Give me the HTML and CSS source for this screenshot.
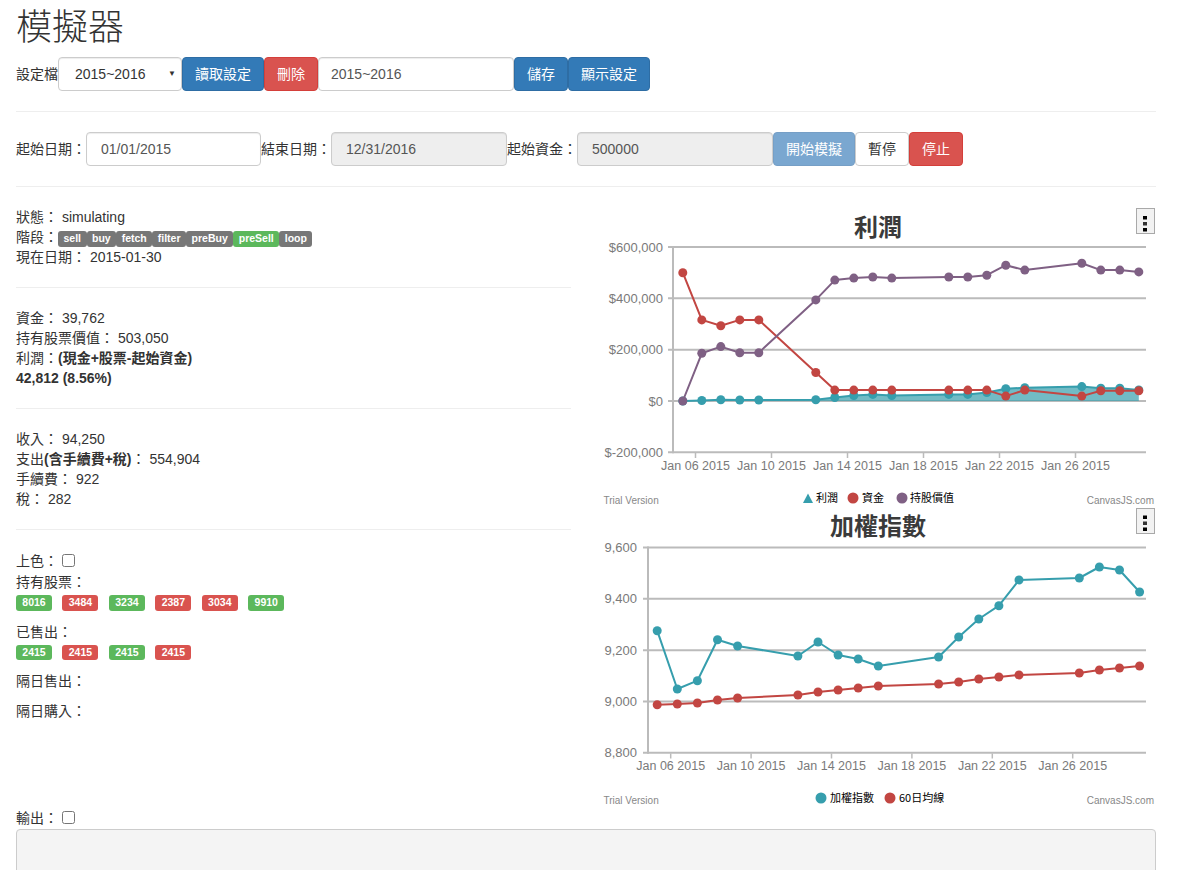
FILE: index.html
```html
<!DOCTYPE html>
<html lang="zh-Hant">
<head>
<meta charset="utf-8">
<title>模擬器</title>
<link rel="stylesheet" href="styles.css">
</head>
<body>
<div class="container">
  <h1 class="page-title">模擬器</h1>

  <div class="toolbar">
    <span class="field-label">設定檔</span>
    <div class="form-control select-box"><span>2015~2016</span><span class="caret">▼</span></div>
    <button class="btn btn-primary">讀取設定</button>
    <button class="btn btn-danger">刪除</button>
    <input class="form-control name-input" value="2015~2016">
    <button class="btn btn-primary">儲存</button>
    <button class="btn btn-primary">顯示設定</button>
  </div>

  <hr>

  <div class="toolbar">
    <span class="field-label">起始日期：</span>
    <input class="form-control date-in start-date" value="01/01/2015">
    <span class="field-label">結束日期：</span>
    <input class="form-control date-in end-date" value="12/31/2016" disabled>
    <span class="field-label">起始資金：</span>
    <input class="form-control date-in capital" value="500000" disabled>
    <button class="btn btn-primary-disabled">開始模擬</button>
    <button class="btn btn-default">暫停</button>
    <button class="btn btn-danger">停止</button>
  </div>

  <hr>

  <div class="main-row">
    <div class="col">
      <div class="line">狀態： simulating</div>
      <div class="line">階段：<span class="label stage label-default">sell</span><span class="label stage label-default">buy</span><span class="label stage label-default">fetch</span><span class="label stage label-default">filter</span><span class="label stage label-default">preBuy</span><span class="label stage label-success">preSell</span><span class="label stage label-default">loop</span></div>
      <div class="line">現在日期： 2015-01-30</div>
      <hr>
      <div class="line">資金： 39,762</div>
      <div class="line">持有股票價值： 503,050</div>
      <div class="line">利潤：<b>(現金+股票-起始資金)</b></div>
      <div class="line"><b>42,812 (8.56%)</b></div>
      <hr>
      <div class="line">收入： 94,250</div>
      <div class="line">支出<b>(含手續費+稅)</b>： 554,904</div>
      <div class="line">手續費： 922</div>
      <div class="line">稅： 282</div>
      <hr>
      <div class="check-line">上色： <input type="checkbox" class="check"></div>
      <div class="group">
        <div class="line">持有股票：</div>
        <div class="tag-row">
          <span class="label label-success">8016</span>
          <span class="label label-danger">3484</span>
          <span class="label label-success">3234</span>
          <span class="label label-danger">2387</span>
          <span class="label label-danger">3034</span>
          <span class="label label-success">9910</span>
        </div>
      </div>
      <div class="group">
        <div class="line">已售出：</div>
        <div class="tag-row">
          <span class="label label-success">2415</span>
          <span class="label label-danger">2415</span>
          <span class="label label-success">2415</span>
          <span class="label label-danger">2415</span>
        </div>
      </div>
      <div class="group">
        <div class="line">隔日售出：</div>
        <div class="tag-row"></div>
      </div>
      <div class="group">
        <div class="line">隔日購入：</div>
        <div class="tag-row"></div>
      </div>
    </div>

    <div class="col charts">
      <svg class="chart" width="555" height="300" viewBox="0 0 555 300">
        <defs>
          <marker id="m1-teal" markerUnits="userSpaceOnUse" markerWidth="10" markerHeight="10" refX="5" refY="5"><circle cx="5" cy="5" r="4.5" fill="#369EAD"/></marker>
          <marker id="m1-red" markerUnits="userSpaceOnUse" markerWidth="10" markerHeight="10" refX="5" refY="5"><circle cx="5" cy="5" r="4.5" fill="#C24642"/></marker>
          <marker id="m1-purple" markerUnits="userSpaceOnUse" markerWidth="10" markerHeight="10" refX="5" refY="5"><circle cx="5" cy="5" r="4.5" fill="#7F6084"/></marker>
        </defs>
        <text class="chart-title" x="277" y="29" text-anchor="middle">利潤</text>
        <rect x="535.5" y="1.5" width="18" height="25" fill="#f2f2f2" stroke="#a9a9a9"/>
        <rect x="542" y="9" width="4" height="3.5" fill="#000"/>
        <rect x="542" y="15" width="4" height="3.5" fill="#333"/>
        <rect x="542" y="21" width="4" height="3.5" fill="#000"/>

        <g class="grid">
          <line x1="67" y1="40" x2="545" y2="40"/>
          <line x1="67" y1="91.3" x2="545" y2="91.3"/>
          <line x1="67" y1="142.7" x2="545" y2="142.7"/>
          <line x1="67" y1="194" x2="545" y2="194"/>
          <line x1="67" y1="245.3" x2="545" y2="245.3"/>
          <line x1="72" y1="39" x2="72" y2="246.3"/>
        </g>
        <g class="ticks">
          <line x1="94.5" y1="246" x2="94.5" y2="251"/>
          <line x1="170.5" y1="246" x2="170.5" y2="251"/>
          <line x1="246.5" y1="246" x2="246.5" y2="251"/>
          <line x1="322.5" y1="246" x2="322.5" y2="251"/>
          <line x1="398.5" y1="246" x2="398.5" y2="251"/>
          <line x1="474.5" y1="246" x2="474.5" y2="251"/>
        </g>
        <g class="ylabels" text-anchor="end">
          <text x="62" y="44.5">$600,000</text>
          <text x="62" y="95.8">$400,000</text>
          <text x="62" y="147.2">$200,000</text>
          <text x="62" y="198.5">$0</text>
          <text x="62" y="249.8">$-200,000</text>
        </g>
        <g class="xlabels" text-anchor="middle">
          <text x="94.5" y="263">Jan 06 2015</text>
          <text x="170.5" y="263">Jan 10 2015</text>
          <text x="246.5" y="263">Jan 14 2015</text>
          <text x="322.5" y="263">Jan 18 2015</text>
          <text x="398.5" y="263">Jan 22 2015</text>
          <text x="474.5" y="263">Jan 26 2015</text>
        </g>

        <polygon class="area" points="81.8,194 100.8,193.5 119.8,192.7 138.8,193 157.8,193 214.8,192.7 233.8,190.5 252.8,188.5 271.8,187.4 290.8,188.5 347.8,187.4 366.8,187.4 385.8,185.6 404.8,181.7 423.8,180.7 480.8,179.6 499.8,181.2 518.8,181.2 537.8,183 537.8,194"/>
        <polyline class="series s-teal" marker-start="url(#m1-teal)" marker-mid="url(#m1-teal)" marker-end="url(#m1-teal)" points="81.8,194 100.8,193.5 119.8,192.7 138.8,193 157.8,193 214.8,192.7 233.8,190.5 252.8,188.5 271.8,187.4 290.8,188.5 347.8,187.4 366.8,187.4 385.8,185.6 404.8,181.7 423.8,180.7 480.8,179.6 499.8,181.2 518.8,181.2 537.8,183"/>
        <polyline class="series s-red" marker-start="url(#m1-red)" marker-mid="url(#m1-red)" marker-end="url(#m1-red)" points="81.8,65.7 100.8,112.9 119.8,118.8 138.8,112.9 157.8,112.9 214.8,165.5 233.8,183.1 252.8,183.1 271.8,183.1 290.8,183.1 347.8,183.1 366.8,183.1 385.8,183.1 404.8,189.1 423.8,183.1 480.8,189.1 499.8,183.7 518.8,183.7 537.8,183.8"/>
        <polyline class="series s-purple" marker-start="url(#m1-purple)" marker-mid="url(#m1-purple)" marker-end="url(#m1-purple)" points="81.8,194 100.8,146.3 119.8,139.6 138.8,145.7 157.8,145.7 214.8,92.9 233.8,73.1 252.8,71.1 271.8,70 290.8,71.1 347.8,70 366.8,70 385.8,68.2 404.8,58.2 423.8,63.1 480.8,56.2 499.8,63.1 518.8,63.1 537.8,64.9"/>

        <polygon points="202,296 212,296 207,286.5" fill="#369EAD"/>
        <text class="legend" x="215" y="295">利潤</text>
        <circle cx="252" cy="291" r="5.5" fill="#C24642"/>
        <text class="legend" x="261" y="295">資金</text>
        <circle cx="301" cy="291" r="5.5" fill="#7F6084"/>
        <text class="legend" x="309" y="295">持股價值</text>

        <text class="credit" x="2.5" y="297">Trial Version</text>
        <text class="credit" x="553" y="297" text-anchor="end">CanvasJS.com</text>
      </svg>

      <svg class="chart" width="555" height="300" viewBox="0 0 555 300">
        <defs>
          <marker id="m2-teal" markerUnits="userSpaceOnUse" markerWidth="10" markerHeight="10" refX="5" refY="5"><circle cx="5" cy="5" r="4.5" fill="#369EAD"/></marker>
          <marker id="m2-red" markerUnits="userSpaceOnUse" markerWidth="10" markerHeight="10" refX="5" refY="5"><circle cx="5" cy="5" r="4.5" fill="#C24642"/></marker>
        </defs>
        <text class="chart-title" x="277" y="28" text-anchor="middle">加權指數</text>
        <rect x="535.5" y="1.5" width="18" height="25" fill="#f2f2f2" stroke="#a9a9a9"/>
        <rect x="542" y="8.5" width="4" height="3.5" fill="#000"/>
        <rect x="542" y="14.5" width="4" height="3.5" fill="#333"/>
        <rect x="542" y="20.5" width="4" height="3.5" fill="#000"/>

        <g class="grid">
          <line x1="42" y1="40.5" x2="545" y2="40.5"/>
          <line x1="42" y1="91.8" x2="545" y2="91.8"/>
          <line x1="42" y1="143.2" x2="545" y2="143.2"/>
          <line x1="42" y1="194.5" x2="545" y2="194.5"/>
          <line x1="42" y1="245.8" x2="545" y2="245.8"/>
          <line x1="47" y1="39.5" x2="47" y2="246.8"/>
        </g>
        <g class="ticks">
          <line x1="69.7" y1="246.5" x2="69.7" y2="251.5"/>
          <line x1="150.1" y1="246.5" x2="150.1" y2="251.5"/>
          <line x1="230.5" y1="246.5" x2="230.5" y2="251.5"/>
          <line x1="310.9" y1="246.5" x2="310.9" y2="251.5"/>
          <line x1="391.3" y1="246.5" x2="391.3" y2="251.5"/>
          <line x1="471.7" y1="246.5" x2="471.7" y2="251.5"/>
        </g>
        <g class="ylabels" text-anchor="end">
          <text x="36" y="45">9,600</text>
          <text x="36" y="96.3">9,400</text>
          <text x="36" y="147.7">9,200</text>
          <text x="36" y="199">9,000</text>
          <text x="36" y="250.3">8,800</text>
        </g>
        <g class="xlabels" text-anchor="middle">
          <text x="69.7" y="263">Jan 06 2015</text>
          <text x="150.1" y="263">Jan 10 2015</text>
          <text x="230.5" y="263">Jan 14 2015</text>
          <text x="310.9" y="263">Jan 18 2015</text>
          <text x="391.3" y="263">Jan 22 2015</text>
          <text x="471.7" y="263">Jan 26 2015</text>
        </g>

        <polyline class="series s-teal" marker-start="url(#m2-teal)" marker-mid="url(#m2-teal)" marker-end="url(#m2-teal)" points="56.2,123.7 76.3,182 96.4,173.7 116.5,132.7 136.6,139 196.9,149 217,135 237.1,148 257.2,152 277.3,159 337.6,150 357.7,130 377.8,112 397.9,98.7 418,73 478.3,71 498.4,60 518.5,63 538.6,85"/>
        <polyline class="series s-red" marker-start="url(#m2-red)" marker-mid="url(#m2-red)" marker-end="url(#m2-red)" points="56.2,197.7 76.3,197 96.4,196 116.5,193 136.6,191 196.9,188 217,185 237.1,183 257.2,181 277.3,179 337.6,177 357.7,175 377.8,172 397.9,170 418,168 478.3,166 498.4,163 518.5,161 538.6,159"/>

        <circle cx="220" cy="291" r="5.5" fill="#369EAD"/>
        <text class="legend" x="229" y="295">加權指數</text>
        <circle cx="289" cy="291" r="5.5" fill="#C24642"/>
        <text class="legend" x="298" y="295">60日均線</text>

        <text class="credit" x="2.5" y="297">Trial Version</text>
        <text class="credit" x="553" y="297" text-anchor="end">CanvasJS.com</text>
      </svg>
    </div>
  </div>

  <div class="check-line">輸出： <input type="checkbox" class="check"></div>
  <textarea class="output"></textarea>
</div>
</body>
</html>
```

FILE: styles.css
```css
* {
  box-sizing: border-box;
}

body {
  margin: 0;
  font-family: "Liberation Sans", "Noto Sans CJK TC", sans-serif;
  font-size: 14px;
  line-height: 20px;
  color: #333;
  background: #fff;
}

.container {
  width: 1172px;
  padding: 0 16px;
}

.page-title {
  margin: 8px 0 10px;
  font-size: 36px;
  line-height: 39px;
  font-weight: 300;
  color: #333;
}

.toolbar {
  display: flex;
  align-items: center;
  height: 34px;
}

.field-label {
  white-space: nowrap;
}

.form-control {
  height: 34px;
  padding: 6px 12px;
  font-family: "Liberation Sans", "Noto Sans CJK TC", sans-serif;
  font-size: 14px;
  line-height: 20px;
  color: #555;
  background: #fff;
  border: 1px solid #ccc;
  border-radius: 4px;
  box-shadow: inset 0 1px 1px rgba(0, 0, 0, 0.075);
}

.form-control:disabled {
  background: #eee;
  color: #555;
}

.select-box {
  width: 124px;
  display: flex;
  align-items: center;
  justify-content: space-between;
  padding: 6px 5px 6px 16px;
  color: #333;
}

.caret {
  font-size: 8px;
  color: #333;
}

.name-input {
  width: 196px;
}

.date-in {
  padding-left: 14px;
}

.start-date {
  width: 175px;
}

.end-date {
  width: 176px;
}

.capital {
  width: 196px;
}

.btn {
  height: 34px;
  padding: 0 12px;
  font-family: "Liberation Sans", "Noto Sans CJK TC", sans-serif;
  font-size: 14px;
  line-height: 20px;
  color: #fff;
  border: 1px solid transparent;
  border-radius: 4px;
  white-space: nowrap;
}

.btn-primary {
  background: #337ab7;
  border-color: #2e6da4;
}

.btn-primary-disabled {
  background: #7aa7d0;
  border-color: #769fc6;
}

.btn-danger {
  background: #d9534f;
  border-color: #d43f3a;
}

.btn-default {
  background: #fff;
  border-color: #ccc;
  color: #333;
}

hr {
  height: 0;
  margin: 20px 0;
  border: 0;
  border-top: 1px solid #eee;
}

.main-row {
  display: flex;
  gap: 30px;
}

.col {
  width: 555px;
}

.charts {
  display: flex;
  flex-direction: column;
}

.line {
  min-height: 20px;
}

.label {
  display: inline-block;
  padding: 2.1px 6.3px 3.15px;
  font-size: 10.5px;
  font-weight: 700;
  line-height: 1;
  color: #fff;
  border-radius: 3px;
  white-space: nowrap;
}

.label.stage {
  padding-left: 5.5px;
  padding-right: 5.5px;
}

.label-default {
  background: #777;
}

.label-success {
  background: #5cb85c;
}

.label-danger {
  background: #d9534f;
}

.check-line {
  display: flex;
  align-items: flex-start;
  height: 22px;
  line-height: 22px;
  white-space: pre;
}

.check {
  width: 13px;
  height: 13px;
  margin: 4px 0 0;
}

.group {
  margin-bottom: 10px;
}

.tag-row {
  display: flex;
  gap: 10.5px;
}

.tag-row .label {
  margin: 3px 0 1px;
}

.chart {
  display: block;
}

.chart-title {
  font-family: "Noto Sans CJK TC", sans-serif;
  font-size: 24px;
  font-weight: 700;
  fill: #3a3a3a;
}

.grid line {
  stroke: #bbb;
  stroke-width: 2;
}

.ticks line {
  stroke: #bbb;
  stroke-width: 1.5;
}

.ylabels text {
  font-family: "Liberation Sans", sans-serif;
  font-size: 13px;
  fill: #7a7a7a;
}

.xlabels text {
  font-family: "Liberation Sans", sans-serif;
  font-size: 12.5px;
  fill: #7a7a7a;
}

.area {
  fill: #369ead;
  fill-opacity: 0.7;
}

.series {
  fill: none;
  stroke-width: 2;
  stroke-linejoin: round;
}

.s-teal {
  stroke: #369ead;
}

.s-red {
  stroke: #c24642;
}

.s-purple {
  stroke: #7f6084;
}

.legend {
  font-family: "Noto Sans CJK TC", sans-serif;
  font-size: 11px;
  fill: #000;
}

.credit {
  font-family: "Liberation Sans", sans-serif;
  font-size: 10px;
  fill: #888;
}

.output {
  display: block;
  width: 1140px;
  height: 100px;
  margin: 0;
  background: #f4f4f4;
  border: 1px solid #ccc;
  border-radius: 4px;
  resize: none;
}
```
